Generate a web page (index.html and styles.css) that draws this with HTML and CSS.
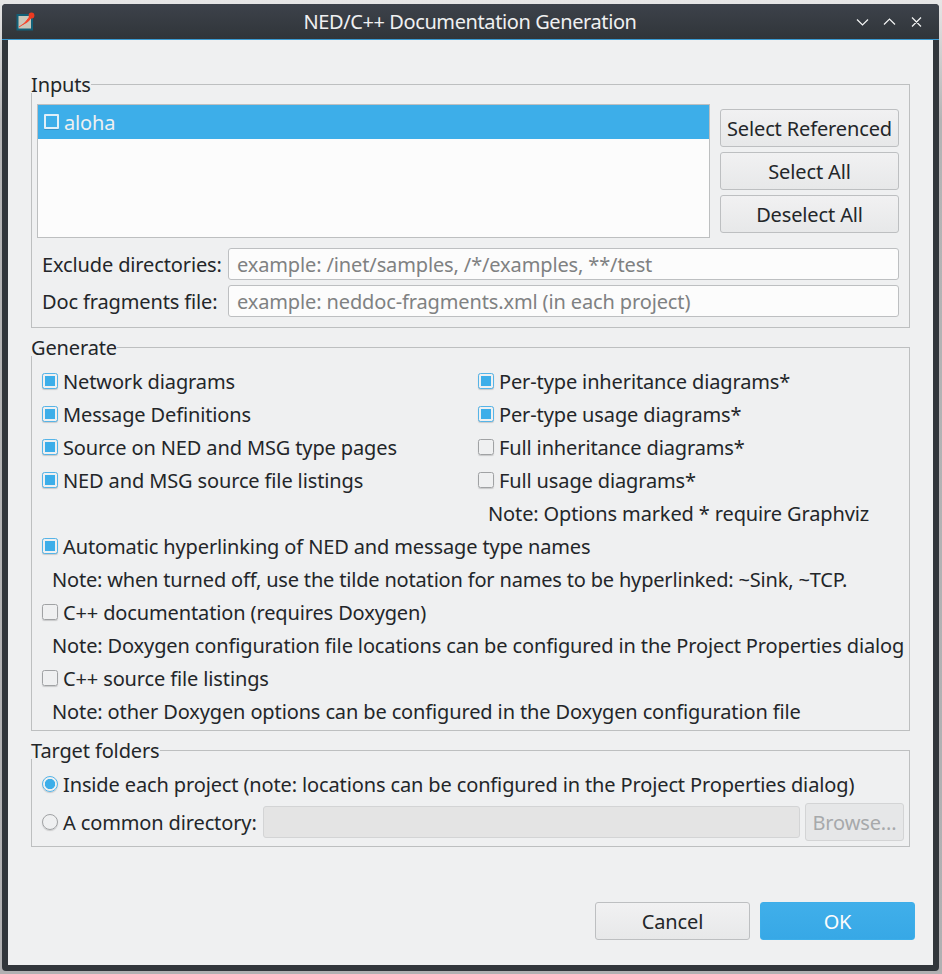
FILE: index.html
```html
<!DOCTYPE html>
<html lang="en">
<head>
<meta charset="utf-8">
<title>NED/C++ Documentation Generation</title>
<link rel="stylesheet" href="styles.css">
</head>
<body>
<div class="window">
  <header class="titlebar">
    <svg class="app-icon" width="20" height="20" viewBox="0 0 20 20"><rect x="1.500" y="3" width="14.500" height="14.500" fill="#c9c7ba" stroke="#126078" stroke-width="2"/><path d="M3 15Q9 12.500 13.500 5" fill="none" stroke="#f5442c" stroke-width="1"/><path d="M6 13.200Q10.500 10 13.500 4.500L15.500 6Q11.500 11.500 6 13.200Z" fill="#f5442c"/><circle cx="15.500" cy="3.500" r="2.900" fill="#ee3a20"/></svg>
    <h1 class="title">NED/C++ Documentation Generation</h1>
    <svg class="controls" width="68" height="14" viewBox="0 0 68 14" fill="none" stroke="#f4f5f5" stroke-width="1.200"><path d="M1 4.500L6.500 10L12 4.500M28 9.500L33.500 4L39 9.500M56 2.500L65 11.500M65 2.500L56 11.500"/></svg>
  </header>
  <main class="dialog">
    <section class="group">
      <h2 class="legend">Inputs</h2>
      <div class="projects">
        <div class="list"><div class="item"><i class="box light"></i><span>aloha</span></div></div>
        <div class="actions">
          <button class="btn">Select Referenced</button>
          <button class="btn">Select All</button>
          <button class="btn">Deselect All</button>
        </div>
      </div>
      <div class="fields">
        <span>Exclude directories:</span><div class="input">example: /inet/samples, /*/examples, **/test</div>
        <span>Doc fragments file:</span><div class="input">example: neddoc-fragments.xml (in each project)</div>
      </div>
    </section>
    <section class="group">
      <h2 class="legend">Generate</h2>
      <div class="options">
        <div class="columns">
          <div>
            <div class="row"><i class="box on"></i><span>Network diagrams</span></div>
            <div class="row"><i class="box on"></i><span>Message Definitions</span></div>
            <div class="row"><i class="box on"></i><span>Source on NED and MSG type pages</span></div>
            <div class="row"><i class="box on"></i><span>NED and MSG source file listings</span></div>
          </div>
          <div>
            <div class="row"><i class="box on"></i><span>Per-type inheritance diagrams*</span></div>
            <div class="row"><i class="box on"></i><span>Per-type usage diagrams*</span></div>
            <div class="row"><i class="box"></i><span>Full inheritance diagrams*</span></div>
            <div class="row"><i class="box"></i><span>Full usage diagrams*</span></div>
            <div class="row note">Note: Options marked * require Graphviz</div>
          </div>
        </div>
        <div class="row"><i class="box on"></i><span>Automatic hyperlinking of NED and message type names</span></div>
        <div class="row note tight">Note: when turned off, use the tilde notation for names to be hyperlinked: ~Sink, ~TCP.</div>
        <div class="row"><i class="box"></i><span>C++ documentation (requires Doxygen)</span></div>
        <div class="row note">Note: Doxygen configuration file locations can be configured in the Project Properties dialog</div>
        <div class="row"><i class="box"></i><span>C++ source file listings</span></div>
        <div class="row note">Note: other Doxygen options can be configured in the Doxygen configuration file</div>
      </div>
    </section>
    <section class="group">
      <h2 class="legend">Target folders</h2>
      <div class="targets">
        <div class="row"><i class="box round on"></i><span>Inside each project (note: locations can be configured in the Project Properties dialog)</span></div>
        <div class="row common"><i class="box round"></i><span class="common-label">A common directory:</span><div class="input disabled"></div><button class="btn disabled">Browse...</button></div>
      </div>
    </section>
    <footer class="footer">
      <button class="btn">Cancel</button>
      <button class="btn primary">OK</button>
    </footer>
  </main>
</div>
</body>
</html>
```
FILE: styles.css
```css
* { box-sizing: border-box; }
body {
  margin: 0;
  height: 974px;
  padding: 4px 3px 3px 2px;
  overflow: hidden;
  background: linear-gradient(#e6e6e6, #b4b4b5 120px, #b0b0b2);
  font: 20px/27px "Noto Sans", sans-serif;
  letter-spacing: -0.13px;
  color: #232629;
}
.window {
  height: 967px;
  background: #31363b;
  border-radius: 4px;
  overflow: hidden;
}
.titlebar {
  display: flex;
  align-items: center;
  height: 36px;
  padding: 0 15px 0 14px;
  background: linear-gradient(#3d424b, #303539);
  border-bottom: 1px solid #3b9bd2;
}
.app-icon { flex: none; }
.title {
  flex: 1;
  margin: 0;
  padding-left: 48px;
  text-align: center;
  font-size: 20px;
  font-weight: 400;
  line-height: 27px;
  letter-spacing: -0.4px;
  color: #eff0f1;
}
.controls { flex: none; }
.dialog {
  height: 925px;
  margin: 0 6px;
  padding: 44px 18px 0 23px;
  background: #eff0f1;
}
.group {
  width: 879px;
  margin-bottom: 19px;
  border: 1px solid #bdbfc0;
}
.legend {
  width: max-content;
  height: 18px;
  margin: -10px 0 0 -1px;
  background: #eff0f1;
  font-size: 20px;
  font-weight: 400;
  line-height: 20px;
}
.projects {
  display: flex;
  gap: 10px;
  padding: 11px 10px 0 5px;
}
.list {
  flex: 1;
  height: 134px;
  border: 1px solid #bdbfc0;
  background: #fcfcfc;
}
.item {
  display: flex;
  align-items: center;
  gap: 5px;
  height: 34px;
  padding-left: 6px;
  background: #3daee9;
  color: #eff0f1;
}
.actions {
  display: flex;
  flex-direction: column;
  gap: 5px;
  width: 179px;
  padding-top: 5px;
}
.btn {
  height: 38px;
  padding: 0;
  border: 1px solid #bdbfc1;
  border-radius: 3px;
  background: linear-gradient(#f1f1f2, #e7e8e9);
  font: inherit;
  letter-spacing: inherit;
  color: inherit;
  white-space: nowrap;
}
.fields {
  display: grid;
  grid-template-columns: 181px 1fr;
  grid-auto-rows: 32px;
  gap: 5px;
  align-items: center;
  padding: 10px;
  white-space: nowrap;
}
.input {
  height: 32px;
  padding-left: 8px;
  border: 1px solid #bdbfc1;
  border-radius: 3px;
  background: #fcfcfc;
  line-height: 31px;
  color: #7f8182;
}
.options { padding: 9px 0 2px 10px; }
.columns {
  display: grid;
  grid-template-columns: 436px 1fr;
}
.row {
  display: flex;
  align-items: center;
  gap: 5px;
  height: 33px;
  line-height: 33px;
  white-space: nowrap;
}
.note { padding-left: 10px; }
.tight { letter-spacing: -0.18px; }
.box {
  flex: none;
  width: 16px;
  height: 16px;
  margin-bottom: 1px;
  border: 1px solid #a0a2a4;
  border-radius: 2.5px;
  box-shadow: 0 1px 1px #c8c9ca;
}
.on {
  border-color: #55b4e8;
  background: #3daee9;
  background-clip: content-box;
  padding: 2px;
}
.light {
  width: 15px;
  height: 15px;
  border: 2px solid #e0eff8;
  border-radius: 1px;
  box-shadow: 0 1px 0 #3292c8;
}
.round { border-radius: 50%; }
.round.on {
  padding: 0;
  background: radial-gradient(circle, #3daee9 4.8px, transparent 5.5px);
}
.targets { padding: 9px 5px 5px 10px; }
.common { height: 38px; margin-top: 2px; }
.common .box { margin-bottom: 0; }
.common-label { width: 195px; }
.common .input { flex: 1; }
.common .btn { width: 99px; }
.disabled {
  border-color: #d3d4d5;
  background: #e3e5e6;
  color: #a7a9ab;
}
.btn.disabled {
  border-color: #d3d4d5;
  background: #e6e7e8;
  color: #a7a9ab;
}
.input.disabled { background: #e4e4e4; }
.footer {
  display: flex;
  justify-content: flex-end;
  gap: 10px;
  padding-top: 36px;
}
.footer .btn { width: 155px; }
.primary {
  border-color: #3daee9;
  background: linear-gradient(#40afea, #37a8e6);
  color: #fcfcfc;
}
```
